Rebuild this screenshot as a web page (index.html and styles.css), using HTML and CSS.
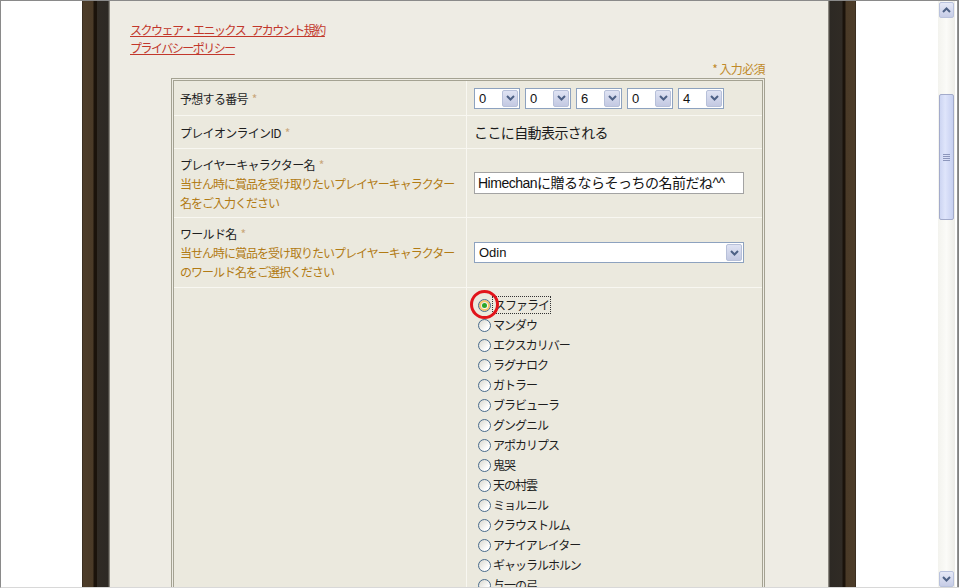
FILE: index.html
```html
<!DOCTYPE html>
<html lang="ja">
<head>
<meta charset="utf-8">
<title>応募フォーム</title>
<link rel="stylesheet" href="styles.css">
</head>
<body>
<div class="window">
  <div class="gutter gutter-left"></div>
  <div class="frame frame-left"></div>
  <div class="paper">
    <div class="links">
      <a class="link" href="#">スクウェア・エニックス アカウント規約</a>
      <a class="link" href="#">プライバシーポリシー</a>
    </div>
    <div class="required">* 入力必須</div>
    <div class="table-outer">
      <div class="form-table">
        <div class="cell label row1"><div>予想する番号<span class="ast">*</span></div></div>
        <div class="cell value row1">
          <div class="selects">
            <div class="sel"><span class="sel-val">0</span><span class="sel-btn"><svg width="9" height="6" viewBox="0 0 9 6"><path d="M1 1 L4.5 4.5 L8 1" fill="none" stroke="#4d6185" stroke-width="2"/></svg></span></div>
            <div class="sel"><span class="sel-val">0</span><span class="sel-btn"><svg width="9" height="6" viewBox="0 0 9 6"><path d="M1 1 L4.5 4.5 L8 1" fill="none" stroke="#4d6185" stroke-width="2"/></svg></span></div>
            <div class="sel"><span class="sel-val">6</span><span class="sel-btn"><svg width="9" height="6" viewBox="0 0 9 6"><path d="M1 1 L4.5 4.5 L8 1" fill="none" stroke="#4d6185" stroke-width="2"/></svg></span></div>
            <div class="sel"><span class="sel-val">0</span><span class="sel-btn"><svg width="9" height="6" viewBox="0 0 9 6"><path d="M1 1 L4.5 4.5 L8 1" fill="none" stroke="#4d6185" stroke-width="2"/></svg></span></div>
            <div class="sel"><span class="sel-val">4</span><span class="sel-btn"><svg width="9" height="6" viewBox="0 0 9 6"><path d="M1 1 L4.5 4.5 L8 1" fill="none" stroke="#4d6185" stroke-width="2"/></svg></span></div>
          </div>
        </div>

        <div class="cell label row2"><div>プレイオンラインID<span class="ast">*</span></div></div>
        <div class="cell value row2"><span class="auto-text">ここに自動表示される</span></div>

        <div class="cell label row3">
          <div>プレイヤーキャラクター名<span class="ast">*</span></div>
          <div class="desc">当せん時に賞品を受け取りたいプレイヤーキャラクター<br>名をご入力ください</div>
        </div>
        <div class="cell value row3">
          <div class="text-input">Himechanに贈るならそっちの名前だね^^</div>
        </div>

        <div class="cell label row4">
          <div>ワールド名<span class="ast">*</span></div>
          <div class="desc">当せん時に賞品を受け取りたいプレイヤーキャラクター<br>のワールド名をご選択ください</div>
        </div>
        <div class="cell value row4">
          <div class="sel sel-wide"><span class="sel-val">Odin</span><span class="sel-btn"><svg width="9" height="6" viewBox="0 0 9 6"><path d="M1 1 L4.5 4.5 L8 1" fill="none" stroke="#4d6185" stroke-width="2"/></svg></span></div>
        </div>

        <div class="cell label row5"></div>
        <div class="cell value row5">
          <ul class="radio-list">
            <li class="radio-item"><span class="radio checked"></span><span class="radio-label focused">スファライ</span><span class="mark"></span></li>
            <li class="radio-item"><span class="radio"></span><span class="radio-label">マンダウ</span></li>
            <li class="radio-item"><span class="radio"></span><span class="radio-label">エクスカリバー</span></li>
            <li class="radio-item"><span class="radio"></span><span class="radio-label">ラグナロク</span></li>
            <li class="radio-item"><span class="radio"></span><span class="radio-label">ガトラー</span></li>
            <li class="radio-item"><span class="radio"></span><span class="radio-label">ブラビューラ</span></li>
            <li class="radio-item"><span class="radio"></span><span class="radio-label">グングニル</span></li>
            <li class="radio-item"><span class="radio"></span><span class="radio-label">アポカリプス</span></li>
            <li class="radio-item"><span class="radio"></span><span class="radio-label">鬼哭</span></li>
            <li class="radio-item"><span class="radio"></span><span class="radio-label">天の村雲</span></li>
            <li class="radio-item"><span class="radio"></span><span class="radio-label">ミョルニル</span></li>
            <li class="radio-item"><span class="radio"></span><span class="radio-label">クラウストルム</span></li>
            <li class="radio-item"><span class="radio"></span><span class="radio-label">アナイアレイター</span></li>
            <li class="radio-item"><span class="radio"></span><span class="radio-label">ギャッラルホルン</span></li>
            <li class="radio-item"><span class="radio"></span><span class="radio-label">与一の弓</span></li>
          </ul>
        </div>
      </div>
    </div>
  </div>
  <div class="frame frame-right"></div>
  <div class="gutter gutter-right"></div>
  <div class="scrollbar">
    <div class="sb-btn"><svg width="9" height="6" viewBox="0 0 9 6"><path d="M1 5 L4.5 1.5 L8 5" fill="none" stroke="#4d6185" stroke-width="2"/></svg></div>
    <div class="sb-track">
      <div class="sb-thumb"><span class="grip"></span></div>
    </div>
    <div class="sb-btn"><svg width="9" height="6" viewBox="0 0 9 6"><path d="M1 1 L4.5 4.5 L8 1" fill="none" stroke="#4d6185" stroke-width="2"/></svg></div>
  </div>
  <div class="win-edge"></div>
</div>
</body>
</html>
```

FILE: styles.css
```css
html, body {
  margin: 0;
  padding: 0;
  background: #ffffff;
  overflow: hidden;
}

.window {
  width: 959px;
  height: 588px;
  box-sizing: border-box;
  border-left: 1px solid #8a8a8a;
  border-top: 1px solid #8a8a8a;
  border-bottom: 1px solid #d8d8d8;
  display: flex;
  overflow: hidden;
  font-family: "Noto Sans CJK JP", sans-serif;
  font-size: 12px;
  color: #1e1e1e;
}

.gutter { background: #ffffff; flex: none; }
.gutter-left { width: 81px; }
.gutter-right { width: 82px; }

.frame { width: 28px; flex: none; }
.frame-left {
  background: linear-gradient(to right,
    #2a2118 0, #4d3d2a 1px, #4a3a27 11px, #1b130b 12px, #1b130b 15px,
    #302b25 15px, #2d2924 26px, #6c6962 27px, #a8a59c 28px);
}
.frame-right {
  background: linear-gradient(to right,
    #a8a59c 0, #6c6962 1px, #2d2924 2px, #302b25 14px, #1b130b 15px,
    #1b130b 17px, #4a3a27 18px, #4d3d2a 27px, #2a2118 28px);
}

.paper {
  width: 718px;
  flex: none;
  background: #eeece4;
  padding-top: 20px;
  box-sizing: border-box;
}

.links {
  display: flex;
  flex-direction: column;
  align-items: flex-start;
  padding-left: 20px;
}
.link {
  color: #c2372b;
  text-decoration: underline;
  line-height: 18px;
  letter-spacing: -1.5px;
  word-spacing: 5px;
}

.required {
  width: 655px;
  text-align: right;
  color: #c08a2a;
  line-height: 17px;
  margin-top: 3px;
  letter-spacing: -0.6px;
}

.table-outer {
  margin-left: 61px;
  margin-top: 1px;
  width: 594px;
  box-sizing: border-box;
  border: 1px solid #a4a292;
  padding: 1px;
}

.form-table {
  border: 1px solid #a4a292;
  display: grid;
  grid-template-columns: 292px 1fr;
  grid-template-rows: 34px 32px 68px 69px auto;
  gap: 1px;
  background: #f8f7f1;
}

.cell {
  background: #ebe9de;
  box-sizing: border-box;
  display: flex;
  flex-direction: column;
  justify-content: center;
}

.label {
  padding-left: 6px;
  letter-spacing: -0.7px;
  line-height: 19px;
}

.value { padding-left: 7px; }

.ast {
  color: #c9a77a;
  margin-left: 4px;
}

.desc {
  color: #b27b14;
  letter-spacing: -1px;
}

.selects { display: flex; gap: 5px; }

.sel {
  width: 46px;
  height: 21px;
  box-sizing: border-box;
  border: 1px solid #8da2bf;
  background: #ffffff;
  display: flex;
  align-items: stretch;
}
.sel-wide { width: 270px; }
.sel-val {
  flex: 1;
  padding-left: 4px;
  font-family: "Liberation Sans", "Noto Sans CJK JP", sans-serif;
  font-size: 13px;
  line-height: 19px;
  color: #111;
}
.sel-btn {
  width: 16px;
  margin: 1px;
  box-sizing: border-box;
  border: 1px solid #b7c0d9;
  border-radius: 2px;
  background: linear-gradient(to bottom, #dfe3f3, #c3c9e2);
  display: flex;
  align-items: center;
  justify-content: center;
}

.auto-text {
  font-size: 14px;
  letter-spacing: -0.6px;
  line-height: 20px;
  color: #1a1a1a;
}

.text-input {
  width: 270px;
  height: 22px;
  box-sizing: border-box;
  border: 1px solid #a3a3a3;
  background: #ffffff;
  padding-left: 3px;
  font-family: "Liberation Sans", "Noto Sans CJK JP", sans-serif;
  font-size: 14px;
  line-height: 20px;
  letter-spacing: -0.5px;
  color: #111;
  white-space: nowrap;
  overflow: hidden;
}

.row5 { justify-content: flex-start; }

.radio-list {
  list-style: none;
  margin: 0;
  padding: 7px 0 0 4px;
}
.radio-item {
  position: relative;
  height: 20px;
  display: flex;
  align-items: center;
}
.radio {
  width: 13px;
  height: 13px;
  box-sizing: border-box;
  border-radius: 50%;
  border: 1px solid #4a6c8c;
  background: linear-gradient(135deg, #d9d8cf, #ffffff 75%);
  margin-right: 2px;
  flex: none;
  display: flex;
  align-items: center;
  justify-content: center;
}
.radio.checked {
  box-shadow: inset 0 0 0 2px #f6c66a;
}
.radio.checked::after {
  content: "";
  width: 5px;
  height: 5px;
  border-radius: 50%;
  background: #2aa52a;
}
.radio-label {
  letter-spacing: -1px;
  line-height: 16px;
}
.radio-label.focused {
  outline: 1px dotted #333;
  padding: 0 1px;
}
.mark {
  position: absolute;
  left: -8px;
  top: -5px;
  width: 29px;
  height: 29px;
  border: 3px solid #e1141b;
  border-radius: 50%;
  box-sizing: border-box;
}

.scrollbar {
  width: 17px;
  flex: none;
  display: flex;
  flex-direction: column;
  padding-top: 1px;
  background: linear-gradient(to right, #f3f3ee, #fbfbf8 50%, #eeede8);
}
.sb-btn {
  height: 16px;
  margin: 0 1px;
  box-sizing: border-box;
  border: 1px solid #b9c2dd;
  border-radius: 2px;
  background: linear-gradient(to bottom, #e6e9f7, #c6cce6);
  display: flex;
  align-items: center;
  justify-content: center;
  flex: none;
}
.sb-track {
  flex: 1;
  padding-top: 76px;
}
.sb-thumb {
  height: 126px;
  margin: 0 1px;
  box-sizing: border-box;
  border: 1px solid #a3abcb;
  border-radius: 2px;
  background: linear-gradient(to right, #cdd5f2, #dfe5fb 40%, #c6cff0);
  display: flex;
  align-items: center;
  justify-content: center;
}
.grip {
  width: 7px;
  height: 7px;
  background: repeating-linear-gradient(to bottom, #8c96bc 0, #8c96bc 1px, transparent 1px, transparent 2px);
}

.win-edge {
  width: 4px;
  flex: none;
  background: linear-gradient(to right, #ffffff 0, #ffffff 2px, #9a9a9a 2px, #7a7a7a 4px);
}
```
